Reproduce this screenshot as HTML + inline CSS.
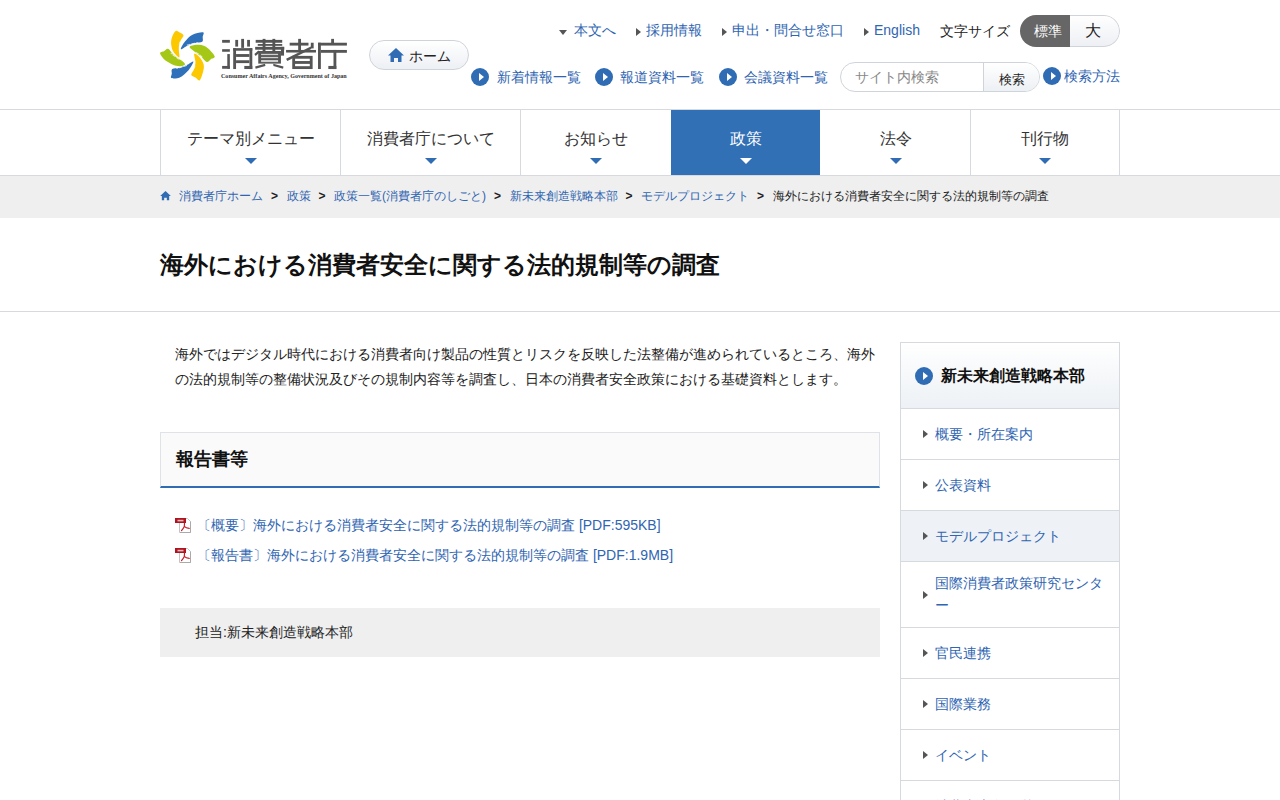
<!DOCTYPE html>
<html lang="ja">
<head>
<meta charset="utf-8">
<title>海外における消費者安全に関する法的規制等の調査｜消費者庁</title>
<style>
*{box-sizing:border-box;margin:0;padding:0}
html,body{width:1280px;height:800px;overflow:hidden;background:#fff}
body{font-family:"Liberation Sans",sans-serif;color:#222;font-size:14px;position:relative}
a{color:#2f65b1;text-decoration:none}
.abs{position:absolute;white-space:nowrap}
/* header */
#hdr{position:absolute;left:0;top:0;width:1280px;height:110px;border-bottom:1px solid #d6dade}
.logo{position:absolute;left:155px;top:25px;width:60px;height:60px}
.logotxt{position:absolute;left:219px;top:31px;font-size:32px;line-height:40px;color:#585858;letter-spacing:0px}
.logosub{position:absolute;left:221px;top:72px;font-family:"Liberation Serif",serif;font-weight:bold;font-size:7px;line-height:8px;color:#333;white-space:nowrap;transform-origin:0 0;transform:scaleX(0.865)}
.homebtn{position:absolute;left:369px;top:40px;width:100px;height:30px;border:1px solid #cfd4da;border-radius:15px;background:linear-gradient(#fff,#edf0f4)}
.homebtn .t{position:absolute;left:39px;top:7px;font-size:14px;line-height:16px;color:#222}
.tri-d{display:inline-block;width:0;height:0;border-left:4px solid transparent;border-right:4px solid transparent;border-top:5px solid #555}
.tri-r{display:inline-block;width:0;height:0;border-top:4px solid transparent;border-bottom:4px solid transparent;border-left:5px solid #555}
.circ{position:absolute;width:18px;height:18px;border-radius:50%;background:#2f6cb4}
.circ:after{content:"";position:absolute;left:8px;top:5px;border-top:4px solid transparent;border-bottom:4px solid transparent;border-left:5px solid #fff}
.fs{position:absolute;left:1020px;top:15px;width:100px;height:32px;border-radius:16px;overflow:hidden}
.fs .on{position:absolute;left:0;top:0;width:50px;height:32px;background:#666;color:#fff;font-size:14px;line-height:32px;text-align:center;padding-left:6px}
.fs .off{position:absolute;left:50px;top:0;width:50px;height:32px;border:1px solid #cfd4da;border-left:none;border-radius:0 16px 16px 0;background:linear-gradient(#fff,#edf0f4);color:#222;font-size:16px;line-height:30px;text-align:center;padding-right:3px}
.srch{position:absolute;left:840px;top:62px;width:200px;height:30px;border:1px solid #cfd4da;border-radius:15px;overflow:hidden;background:#fff}
.srch .ph{position:absolute;left:14px;top:6.5px;font-size:13.6px;line-height:16px;color:#888}
.srch .btn{position:absolute;left:142px;top:0;width:57px;height:28px;border-left:1px solid #cfd4da;background:linear-gradient(#fff,#edf0f4);font-size:13px;line-height:16px;color:#222;text-align:center;padding-top:8.5px}
/* nav */
#nav{position:absolute;left:0;top:110px;width:1280px;height:66px;border-bottom:1px solid #d6dade}
.tab{position:absolute;top:0;height:65px;border-left:1px solid #d6dade;text-align:center;color:#333;font-size:16px}
.tab .l{position:absolute;left:0;right:0;top:19px;line-height:20px}
.tab .ar{position:absolute;left:50%;top:48px;margin-left:-6px;border-left:6px solid transparent;border-right:6px solid transparent;border-top:6px solid #2f6cb4}
.tab.act{background:#3270b6;color:#fff;border-left:1px solid #fff}
.tab.act .ar{border-top-color:#fff}
/* breadcrumb */
#bc{position:absolute;left:0;top:176px;width:1280px;height:42px;background:#efefef;font-size:12px}
#bc .in{position:absolute;left:160px;top:12px;line-height:16px;white-space:nowrap}
#bc .sep{display:inline-block;padding:0 8.5px 0 8px;color:#222;font-weight:bold;font-size:12px}
/* title */
#ttl{position:absolute;left:0;top:218px;width:1280px;height:94px;border-bottom:1px solid #d6dade}
#ttl h1{position:absolute;left:160px;top:30px;font-size:24px;line-height:34px;font-weight:bold;color:#111;white-space:nowrap}
/* main */
.lead{position:absolute;left:175px;top:342px;width:705px;font-size:14px;line-height:24.5px;color:#222}
.h2box{position:absolute;left:160px;top:432px;width:720px;height:56px;border:1px solid #dfe2e6;border-bottom:2px solid #2f6cb4;background:#fafafa}
.h2box h2{position:absolute;left:15px;top:14px;font-size:18px;line-height:24px;font-weight:bold;color:#111}
.pdf{position:absolute;left:175px;font-size:14px;line-height:20px;white-space:nowrap}
.pdf svg{position:absolute;left:0;top:3px}
.pdf a{position:absolute;left:22px;top:0}
.tanto{position:absolute;left:160px;top:608px;width:720px;height:49px;background:#efefef}
.tanto p{position:absolute;left:35px;top:15px;font-size:14px;line-height:18px;color:#222;white-space:nowrap}
/* side */
.side{position:absolute;left:900px;top:342px;width:220px;border:1px solid #d6dade;border-bottom:none}
.side .hd{position:relative;height:66px;border-bottom:1px solid #d6dade;background:linear-gradient(#fff,#edf1f5)}
.side .hd .circ{left:14px;top:24px}
.side .hd .t{position:absolute;left:40px;top:23px;font-size:16px;line-height:20px;font-weight:bold;color:#111;white-space:nowrap}
.side .it{position:relative;height:51px;border-bottom:1px solid #d6dade}
.side .it .tri-r{position:absolute;left:22px;top:50%;margin-top:-4px}
.side .it .t{position:absolute;left:34px;top:14px;width:175px;font-size:14px;line-height:22px;color:#2f65b1}
.side .it.cur{background:#eef2f6}
</style>
</head>
<body>
<div id="hdr">
  <svg class="logo" viewBox="0 0 800 800">
    <path fill="#fcc800" d="M275 80 C258 90 238 132 228 160 C218 188 213 218 215 250 C217 282 224 320 242 350 C260 380 309 434 322 432 C335 430 318 367 318 340 C318 313 318 293 322 270 C326 247 335 222 345 200 C355 178 382 157 380 140 C378 123 348 110 330 100 C312 90 292 70 275 80 Z"/>
    <path fill="#2e70b9" d="M345 322 C340 313 374 252 400 220 C426 188 460 150 500 130 C540 110 617 93 640 98 C663 103 638 139 636 160 C634 181 648 209 630 222 C612 235 563 231 530 240 C497 249 461 261 430 275 C399 289 350 331 345 322 Z"/>
    <path fill="#a5c816" d="M462 292 C465 275 524 262 560 262 C596 262 641 264 680 290 C719 316 784 388 795 415 C806 442 762 442 745 455 C728 468 711 497 690 492 C669 487 645 446 620 425 C595 404 566 387 540 365 C514 343 459 309 462 292 Z"/>
    <path fill="#fcc800" d="M525 382 C537 377 589 420 610 450 C631 480 654 513 652 560 C650 607 619 709 600 732 C581 755 560 712 540 700 C520 688 486 683 483 663 C480 643 516 610 525 580 C534 550 537 513 537 480 C537 447 513 387 525 382 Z"/>
    <path fill="#2e70b9" d="M512 488 C515 500 480 565 450 600 C420 635 368 682 330 700 C292 718 238 716 220 708 C202 700 222 670 224 650 C226 630 212 601 230 588 C248 575 297 580 330 570 C363 560 400 544 430 530 C460 516 509 476 512 488 Z"/>
    <path fill="#a5c816" d="M400 522 C397 538 342 555 300 548 C258 541 189 508 150 480 C111 452 73 402 68 380 C63 358 102 360 120 350 C138 340 155 311 175 318 C195 325 216 368 240 390 C264 412 293 428 320 450 C347 472 403 506 400 522 Z"/>
    <g stroke="#fff" stroke-width="14" stroke-linecap="round" fill="none" opacity="0.75" stroke-dasharray="40 22">
      <path d="M430 268 C480 250 530 240 570 238"/>
      <path d="M545 365 C580 385 610 410 640 440"/>
      <path d="M420 540 C380 555 330 570 290 575"/>
      <path d="M320 455 C290 435 250 405 215 380"/>
      <path d="M328 330 C322 290 322 250 330 220" stroke-width="10"/>
      <path d="M530 480 C535 510 535 540 528 570" stroke-width="10"/>
    </g>
  </svg>
  <svg style="position:absolute;left:0;top:0" width="400" height="100" viewBox="0 0 400 100"><g fill="#555">
    <g transform="translate(218 35) scale(0.05156)">
      <rect x="80" y="95" width="150" height="55"/><rect x="80" y="275" width="150" height="50"/><rect x="180" y="370" width="50" height="285"/><rect x="80" y="600" width="150" height="55"/>
      <rect x="335" y="95" width="55" height="130"/><rect x="450" y="75" width="55" height="175"/><rect x="565" y="95" width="55" height="130"/>
      <rect x="295" y="255" width="55" height="405"/><rect x="295" y="255" width="370" height="50"/><rect x="610" y="255" width="55" height="405"/>
      <rect x="350" y="370" width="260" height="55"/><rect x="350" y="490" width="260" height="55"/><rect x="510" y="600" width="155" height="60"/>
    </g>
    <g transform="translate(250 35) scale(0.05156)">
      <rect x="110" y="95" width="515" height="55"/><rect x="150" y="175" width="475" height="35"/><rect x="100" y="230" width="565" height="55"/>
      <rect x="600" y="230" width="60" height="170"/><rect x="150" y="310" width="450" height="25"/>
      <rect x="245" y="75" width="55" height="260"/><rect x="435" y="75" width="55" height="260"/>
      <polygon points="85,370 165,300 190,335 110,405"/>
      <rect x="160" y="330" width="440" height="225"/>
      <polygon points="100,610 290,560 300,600 110,655"/><polygon points="450,560 650,610 640,655 455,600"/>
    </g>
    <g transform="translate(284 35) scale(0.05156)">
      <rect x="110" y="150" width="365" height="55"/><rect x="275" y="75" width="55" height="255"/><rect x="40" y="290" width="580" height="50"/>
      <polygon points="40,460 520,225 530,270 65,505"/><rect x="520" y="150" width="55" height="110"/>
      <rect x="160" y="405" width="395" height="255"/>
      <rect x="915" y="75" width="55" height="110"/><rect x="660" y="150" width="560" height="55"/><rect x="660" y="150" width="55" height="510"/>
      <rect x="715" y="290" width="505" height="55"/><rect x="960" y="290" width="55" height="370"/><rect x="860" y="600" width="155" height="60"/>
    </g>
    <g fill="#d0d0d0">
      <g transform="translate(250 35) scale(0.05156)"><rect x="215" y="365" width="330" height="25"/><rect x="215" y="425" width="330" height="25"/><rect x="215" y="485" width="330" height="40"/></g>
      <g fill="#fff" transform="translate(284 35) scale(0.05156)"><rect x="215" y="460" width="285" height="45"/><rect x="215" y="560" width="285" height="45"/></g>
    </g>
  </g></svg>
  <div class="logosub">Consumer Affairs Agency, Government of Japan</div>
  <div class="homebtn">
    <svg style="position:absolute;left:18px;top:7px" width="16" height="15" viewBox="0 0 16 15"><path fill="#2f6cb4" d="M8 0 L16 7.5 L13.5 7.5 L13.5 14 L10 14 L10 10 L6 10 L6 14 L2.5 14 L2.5 7.5 L0 7.5 Z"/></svg>
    <span class="t">ホーム</span>
  </div>

  <span class="abs tri-d" style="left:559px;top:30px"></span>
  <a class="abs" style="left:574px;top:22px;font-size:14px;line-height:16px">本文へ</a>
  <span class="abs tri-r" style="left:636px;top:28px"></span>
  <a class="abs" style="left:646px;top:22px;font-size:14px;line-height:16px">採用情報</a>
  <span class="abs tri-r" style="left:722px;top:28px"></span>
  <a class="abs" style="left:732px;top:22px;font-size:14px;line-height:16px">申出・問合せ窓口</a>
  <span class="abs tri-r" style="left:864px;top:28px"></span>
  <a class="abs" style="left:874px;top:22px;font-size:14px;line-height:16px">English</a>
  <span class="abs" style="left:940px;top:23px;font-size:14px;line-height:16px;color:#222">文字サイズ</span>
  <div class="fs"><span class="on">標準</span><span class="off">大</span></div>

  <span class="circ" style="left:471px;top:68px"></span>
  <a class="abs" style="left:497px;top:69px;font-size:14px;line-height:16px">新着情報一覧</a>
  <span class="circ" style="left:595px;top:68px"></span>
  <a class="abs" style="left:620px;top:69px;font-size:14px;line-height:16px">報道資料一覧</a>
  <span class="circ" style="left:719px;top:68px"></span>
  <a class="abs" style="left:744px;top:69px;font-size:14px;line-height:16px">会議資料一覧</a>
  <div class="srch"><span class="ph">サイト内検索</span><span class="btn">検索</span></div>
  <span class="circ" style="left:1043px;top:67px"></span>
  <a class="abs" style="left:1064px;top:68px;font-size:14px;line-height:16px">検索方法</a>
</div>

<div id="nav">
  <div class="tab" style="left:160px;width:180px"><span class="l">テーマ別メニュー</span><span class="ar"></span></div>
  <div class="tab" style="left:340px;width:180px"><span class="l">消費者庁について</span><span class="ar"></span></div>
  <div class="tab" style="left:520px;width:150px"><span class="l">お知らせ</span><span class="ar"></span></div>
  <div class="tab act" style="left:670px;width:150px"><span class="l">政策</span><span class="ar"></span></div>
  <div class="tab" style="left:820px;width:150px;border-left-color:transparent"><span class="l">法令</span><span class="ar"></span></div>
  <div class="tab" style="left:970px;width:150px;border-right:1px solid #d6dade"><span class="l">刊行物</span><span class="ar"></span></div>
</div>

<div id="bc"><div class="in">
  <svg width="11" height="10" viewBox="0 0 16 15" style="vertical-align:-1px;margin-right:8px"><path fill="#2f6cb4" d="M8 0 L16 7.5 L13.5 7.5 L13.5 14 L10 14 L10 10 L6 10 L6 14 L2.5 14 L2.5 7.5 L0 7.5 Z"/></svg><a>消費者庁ホーム</a><span class="sep">&gt;</span><a>政策</a><span class="sep">&gt;</span><a>政策一覧(消費者庁のしごと)</a><span class="sep">&gt;</span><a>新未来創造戦略本部</a><span class="sep">&gt;</span><a>モデルプロジェクト</a><span class="sep">&gt;</span><span>海外における消費者安全に関する法的規制等の調査</span>
</div></div>

<div id="ttl"><h1>海外における消費者安全に関する法的規制等の調査</h1></div>

<p class="lead">海外ではデジタル時代における消費者向け製品の性質とリスクを反映した法整備が進められているところ、海外の法的規制等の整備状況及びその規制内容等を調査し、日本の消費者安全政策における基礎資料とします。</p>

<div class="h2box"><h2>報告書等</h2></div>

<div class="pdf" style="top:515px">
  <svg width="17" height="16" viewBox="0 0 17 16"><path fill="#fff" stroke="#c4c4c4" stroke-width="1" d="M4.5 0.5 H12.5 L15.5 3.5 V14.5 H4.5 Z"/><path fill="none" stroke="#aaa" stroke-width="1" d="M15.5 3.5 V14.5 H5"/><rect x="0" y="0" width="11" height="5" fill="#ad1420"/><rect x="2.5" y="1.8" width="6" height="1.6" fill="#e9b9bc"/><path fill="none" stroke="#c81b25" stroke-width="1.2" stroke-linecap="round" d="M9.5 5 C9.6 6.5 9.2 7.8 9.3 8.4 C10.5 9.6 12.5 10.2 14.2 10.4 M9.3 8.4 C8.5 10 7.5 11.5 6.5 12.6"/></svg>
  <a>〔概要〕海外における消費者安全に関する法的規制等の調査 [PDF:595KB]</a>
</div>
<div class="pdf" style="top:545px">
  <svg width="17" height="16" viewBox="0 0 17 16"><path fill="#fff" stroke="#c4c4c4" stroke-width="1" d="M4.5 0.5 H12.5 L15.5 3.5 V14.5 H4.5 Z"/><path fill="none" stroke="#aaa" stroke-width="1" d="M15.5 3.5 V14.5 H5"/><rect x="0" y="0" width="11" height="5" fill="#ad1420"/><rect x="2.5" y="1.8" width="6" height="1.6" fill="#e9b9bc"/><path fill="none" stroke="#c81b25" stroke-width="1.2" stroke-linecap="round" d="M9.5 5 C9.6 6.5 9.2 7.8 9.3 8.4 C10.5 9.6 12.5 10.2 14.2 10.4 M9.3 8.4 C8.5 10 7.5 11.5 6.5 12.6"/></svg>
  <a>〔報告書〕海外における消費者安全に関する法的規制等の調査 [PDF:1.9MB]</a>
</div>

<div class="tanto"><p>担当:新未来創造戦略本部</p></div>

<div class="side">
  <div class="hd"><span class="circ"></span><span class="t">新未来創造戦略本部</span></div>
  <div class="it"><span class="tri-r"></span><span class="t">概要・所在案内</span></div>
  <div class="it"><span class="tri-r"></span><span class="t">公表資料</span></div>
  <div class="it cur"><span class="tri-r"></span><span class="t">モデルプロジェクト</span></div>
  <div class="it" style="height:66px"><span class="tri-r"></span><span class="t" style="top:10px">国際消費者政策研究センター</span></div>
  <div class="it"><span class="tri-r"></span><span class="t">官民連携</span></div>
  <div class="it"><span class="tri-r"></span><span class="t">国際業務</span></div>
  <div class="it"><span class="tri-r"></span><span class="t">イベント</span></div>
  <div class="it"><span class="tri-r"></span><span class="t">消費者志向経営</span></div>
</div>
</body>
</html>
